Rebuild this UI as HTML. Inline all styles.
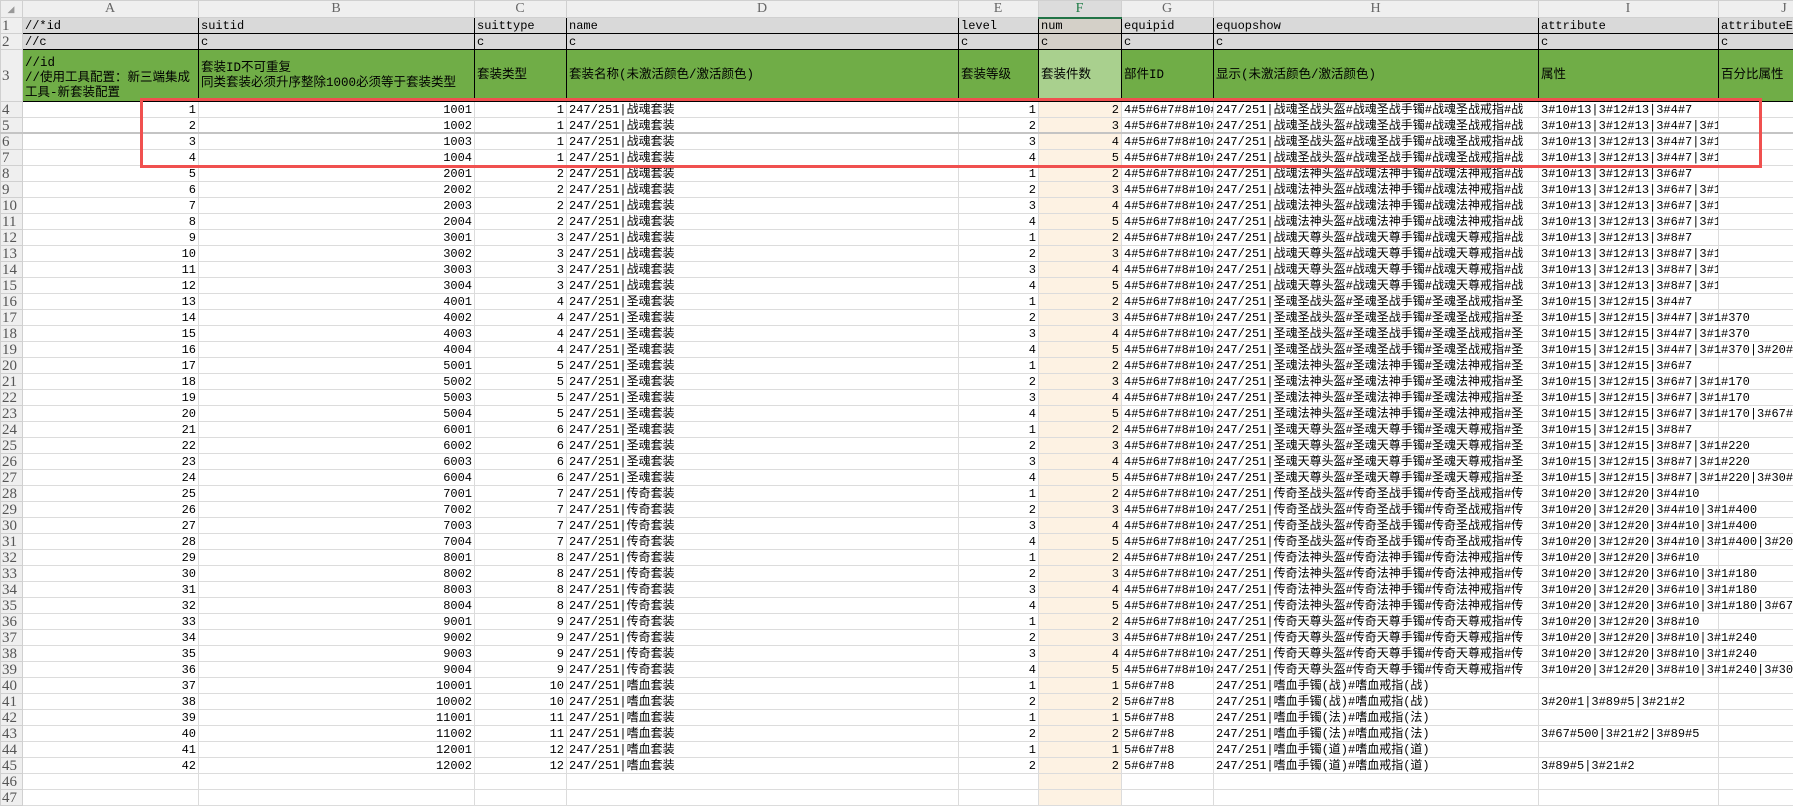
<!DOCTYPE html>
<html><head><meta charset="utf-8"><style>
*{box-sizing:border-box;margin:0;padding:0}
body{width:1793px;height:802px;overflow:hidden;background:#fff;position:relative;font-family:"Liberation Mono","Noto Sans CJK SC",monospace;font-size:12px;color:#000}
table{border-collapse:collapse;table-layout:fixed;width:1850px;position:absolute;left:0;top:0}
td,th{border:1px solid #dcdcdc;height:16px;line-height:14px;white-space:nowrap;overflow:hidden;padding:0 2px;vertical-align:bottom;font-weight:normal}
th{background:#efefef;color:#555;font-family:"Liberation Serif",serif;font-size:15px;text-align:left;padding-left:1px;border-color:#d0d0d0}
tr.h th{height:17px;text-align:center;font-size:14px;color:#666;vertical-align:middle}
tr.h th.sel{background:#dcdcdc;color:#1e7b45;border-bottom:2px solid #217346}
tr.g td{background:#d9d9d9;border-color:#000}
tr.g td.f{background:#d4d0c8}
tr.gr td{background:#70ad47;border-color:#000;height:52px;vertical-align:middle;white-space:normal;line-height:15px;font-size:12.5px}
tr.gr td.f{background:#a9d08e}
tr.gr th{vertical-align:middle}
td.r{text-align:right}
td.f{background:#fdf2e3}
td.v{overflow:visible}
</style></head><body>
<table>
<colgroup><col style="width:22px"><col style="width:176px"><col style="width:276px"><col style="width:92px"><col style="width:392px"><col style="width:80px"><col style="width:83px"><col style="width:92px"><col style="width:325px"><col style="width:180px"><col style="width:132px"></colgroup>
<tr class="h"><th style="font-size:9px;color:#999">◢</th><th>A</th><th>B</th><th>C</th><th>D</th><th>E</th><th class="sel">F</th><th>G</th><th>H</th><th>I</th><th>J</th></tr>
<tr class="g"><th>1</th><td>//*id</td><td>suitid</td><td>suittype</td><td>name</td><td>level</td><td class="f">num</td><td>equipid</td><td>equopshow</td><td>attribute</td><td>attributeEX</td></tr>
<tr class="g"><th>2</th><td>//c</td><td>c</td><td>c</td><td>c</td><td>c</td><td class="f">c</td><td>c</td><td>c</td><td>c</td><td>c</td></tr>
<tr class="gr"><th>3</th><td style="vertical-align:bottom">//id<br>//使用工具配置：新三端集成工具-新套装配置</td><td>套装ID不可重复<br>同类套装必须升序整除1000必须等于套装类型</td><td>套装类型</td><td>套装名称(未激活颜色/激活颜色)</td><td>套装等级</td><td class="f">套装件数</td><td>部件ID</td><td>显示(未激活颜色/激活颜色)</td><td>属性</td><td>百分比属性</td></tr>
<tr><th>4</th><td class="r">1</td><td class="r">1001</td><td class="r">1</td><td>247/251|战魂套装</td><td class="r">1</td><td class="f r">2</td><td>4#5#6#7#8#10#</td><td>247/251|战魂圣战头盔#战魂圣战手镯#战魂圣战戒指#战</td><td>3#10#13|3#12#13|3#4#7</td><td></td></tr>
<tr><th>5</th><td class="r">2</td><td class="r">1002</td><td class="r">1</td><td>247/251|战魂套装</td><td class="r">2</td><td class="f r">3</td><td>4#5#6#7#8#10#</td><td>247/251|战魂圣战头盔#战魂圣战手镯#战魂圣战戒指#战</td><td>3#10#13|3#12#13|3#4#7|3#1#10</td><td></td></tr>
<tr><th>6</th><td class="r">3</td><td class="r">1003</td><td class="r">1</td><td>247/251|战魂套装</td><td class="r">3</td><td class="f r">4</td><td>4#5#6#7#8#10#</td><td>247/251|战魂圣战头盔#战魂圣战手镯#战魂圣战戒指#战</td><td>3#10#13|3#12#13|3#4#7|3#1#10</td><td></td></tr>
<tr><th>7</th><td class="r">4</td><td class="r">1004</td><td class="r">1</td><td>247/251|战魂套装</td><td class="r">4</td><td class="f r">5</td><td>4#5#6#7#8#10#</td><td>247/251|战魂圣战头盔#战魂圣战手镯#战魂圣战戒指#战</td><td>3#10#13|3#12#13|3#4#7|3#1#10</td><td></td></tr>
<tr><th>8</th><td class="r">5</td><td class="r">2001</td><td class="r">2</td><td>247/251|战魂套装</td><td class="r">1</td><td class="f r">2</td><td>4#5#6#7#8#10#</td><td>247/251|战魂法神头盔#战魂法神手镯#战魂法神戒指#战</td><td>3#10#13|3#12#13|3#6#7</td><td></td></tr>
<tr><th>9</th><td class="r">6</td><td class="r">2002</td><td class="r">2</td><td>247/251|战魂套装</td><td class="r">2</td><td class="f r">3</td><td>4#5#6#7#8#10#</td><td>247/251|战魂法神头盔#战魂法神手镯#战魂法神戒指#战</td><td>3#10#13|3#12#13|3#6#7|3#1#10</td><td></td></tr>
<tr><th>10</th><td class="r">7</td><td class="r">2003</td><td class="r">2</td><td>247/251|战魂套装</td><td class="r">3</td><td class="f r">4</td><td>4#5#6#7#8#10#</td><td>247/251|战魂法神头盔#战魂法神手镯#战魂法神戒指#战</td><td>3#10#13|3#12#13|3#6#7|3#1#10</td><td></td></tr>
<tr><th>11</th><td class="r">8</td><td class="r">2004</td><td class="r">2</td><td>247/251|战魂套装</td><td class="r">4</td><td class="f r">5</td><td>4#5#6#7#8#10#</td><td>247/251|战魂法神头盔#战魂法神手镯#战魂法神戒指#战</td><td>3#10#13|3#12#13|3#6#7|3#1#10</td><td></td></tr>
<tr><th>12</th><td class="r">9</td><td class="r">3001</td><td class="r">3</td><td>247/251|战魂套装</td><td class="r">1</td><td class="f r">2</td><td>4#5#6#7#8#10#</td><td>247/251|战魂天尊头盔#战魂天尊手镯#战魂天尊戒指#战</td><td>3#10#13|3#12#13|3#8#7</td><td></td></tr>
<tr><th>13</th><td class="r">10</td><td class="r">3002</td><td class="r">3</td><td>247/251|战魂套装</td><td class="r">2</td><td class="f r">3</td><td>4#5#6#7#8#10#</td><td>247/251|战魂天尊头盔#战魂天尊手镯#战魂天尊戒指#战</td><td>3#10#13|3#12#13|3#8#7|3#1#10</td><td></td></tr>
<tr><th>14</th><td class="r">11</td><td class="r">3003</td><td class="r">3</td><td>247/251|战魂套装</td><td class="r">3</td><td class="f r">4</td><td>4#5#6#7#8#10#</td><td>247/251|战魂天尊头盔#战魂天尊手镯#战魂天尊戒指#战</td><td>3#10#13|3#12#13|3#8#7|3#1#10</td><td></td></tr>
<tr><th>15</th><td class="r">12</td><td class="r">3004</td><td class="r">3</td><td>247/251|战魂套装</td><td class="r">4</td><td class="f r">5</td><td>4#5#6#7#8#10#</td><td>247/251|战魂天尊头盔#战魂天尊手镯#战魂天尊戒指#战</td><td>3#10#13|3#12#13|3#8#7|3#1#10</td><td></td></tr>
<tr><th>16</th><td class="r">13</td><td class="r">4001</td><td class="r">4</td><td>247/251|圣魂套装</td><td class="r">1</td><td class="f r">2</td><td>4#5#6#7#8#10#</td><td>247/251|圣魂圣战头盔#圣魂圣战手镯#圣魂圣战戒指#圣</td><td>3#10#15|3#12#15|3#4#7</td><td></td></tr>
<tr><th>17</th><td class="r">14</td><td class="r">4002</td><td class="r">4</td><td>247/251|圣魂套装</td><td class="r">2</td><td class="f r">3</td><td>4#5#6#7#8#10#</td><td>247/251|圣魂圣战头盔#圣魂圣战手镯#圣魂圣战戒指#圣</td><td class="v">3#10#15|3#12#15|3#4#7|3#1#370</td><td></td></tr>
<tr><th>18</th><td class="r">15</td><td class="r">4003</td><td class="r">4</td><td>247/251|圣魂套装</td><td class="r">3</td><td class="f r">4</td><td>4#5#6#7#8#10#</td><td>247/251|圣魂圣战头盔#圣魂圣战手镯#圣魂圣战戒指#圣</td><td class="v">3#10#15|3#12#15|3#4#7|3#1#370</td><td></td></tr>
<tr><th>19</th><td class="r">16</td><td class="r">4004</td><td class="r">4</td><td>247/251|圣魂套装</td><td class="r">4</td><td class="f r">5</td><td>4#5#6#7#8#10#</td><td>247/251|圣魂圣战头盔#圣魂圣战手镯#圣魂圣战戒指#圣</td><td class="v">3#10#15|3#12#15|3#4#7|3#1#370|3#20#2</td><td></td></tr>
<tr><th>20</th><td class="r">17</td><td class="r">5001</td><td class="r">5</td><td>247/251|圣魂套装</td><td class="r">1</td><td class="f r">2</td><td>4#5#6#7#8#10#</td><td>247/251|圣魂法神头盔#圣魂法神手镯#圣魂法神戒指#圣</td><td>3#10#15|3#12#15|3#6#7</td><td></td></tr>
<tr><th>21</th><td class="r">18</td><td class="r">5002</td><td class="r">5</td><td>247/251|圣魂套装</td><td class="r">2</td><td class="f r">3</td><td>4#5#6#7#8#10#</td><td>247/251|圣魂法神头盔#圣魂法神手镯#圣魂法神戒指#圣</td><td class="v">3#10#15|3#12#15|3#6#7|3#1#170</td><td></td></tr>
<tr><th>22</th><td class="r">19</td><td class="r">5003</td><td class="r">5</td><td>247/251|圣魂套装</td><td class="r">3</td><td class="f r">4</td><td>4#5#6#7#8#10#</td><td>247/251|圣魂法神头盔#圣魂法神手镯#圣魂法神戒指#圣</td><td class="v">3#10#15|3#12#15|3#6#7|3#1#170</td><td></td></tr>
<tr><th>23</th><td class="r">20</td><td class="r">5004</td><td class="r">5</td><td>247/251|圣魂套装</td><td class="r">4</td><td class="f r">5</td><td>4#5#6#7#8#10#</td><td>247/251|圣魂法神头盔#圣魂法神手镯#圣魂法神戒指#圣</td><td class="v">3#10#15|3#12#15|3#6#7|3#1#170|3#67#5</td><td></td></tr>
<tr><th>24</th><td class="r">21</td><td class="r">6001</td><td class="r">6</td><td>247/251|圣魂套装</td><td class="r">1</td><td class="f r">2</td><td>4#5#6#7#8#10#</td><td>247/251|圣魂天尊头盔#圣魂天尊手镯#圣魂天尊戒指#圣</td><td>3#10#15|3#12#15|3#8#7</td><td></td></tr>
<tr><th>25</th><td class="r">22</td><td class="r">6002</td><td class="r">6</td><td>247/251|圣魂套装</td><td class="r">2</td><td class="f r">3</td><td>4#5#6#7#8#10#</td><td>247/251|圣魂天尊头盔#圣魂天尊手镯#圣魂天尊戒指#圣</td><td class="v">3#10#15|3#12#15|3#8#7|3#1#220</td><td></td></tr>
<tr><th>26</th><td class="r">23</td><td class="r">6003</td><td class="r">6</td><td>247/251|圣魂套装</td><td class="r">3</td><td class="f r">4</td><td>4#5#6#7#8#10#</td><td>247/251|圣魂天尊头盔#圣魂天尊手镯#圣魂天尊戒指#圣</td><td class="v">3#10#15|3#12#15|3#8#7|3#1#220</td><td></td></tr>
<tr><th>27</th><td class="r">24</td><td class="r">6004</td><td class="r">6</td><td>247/251|圣魂套装</td><td class="r">4</td><td class="f r">5</td><td>4#5#6#7#8#10#</td><td>247/251|圣魂天尊头盔#圣魂天尊手镯#圣魂天尊戒指#圣</td><td class="v">3#10#15|3#12#15|3#8#7|3#1#220|3#30#1</td><td></td></tr>
<tr><th>28</th><td class="r">25</td><td class="r">7001</td><td class="r">7</td><td>247/251|传奇套装</td><td class="r">1</td><td class="f r">2</td><td>4#5#6#7#8#10#</td><td>247/251|传奇圣战头盔#传奇圣战手镯#传奇圣战戒指#传</td><td>3#10#20|3#12#20|3#4#10</td><td></td></tr>
<tr><th>29</th><td class="r">26</td><td class="r">7002</td><td class="r">7</td><td>247/251|传奇套装</td><td class="r">2</td><td class="f r">3</td><td>4#5#6#7#8#10#</td><td>247/251|传奇圣战头盔#传奇圣战手镯#传奇圣战戒指#传</td><td class="v">3#10#20|3#12#20|3#4#10|3#1#400</td><td></td></tr>
<tr><th>30</th><td class="r">27</td><td class="r">7003</td><td class="r">7</td><td>247/251|传奇套装</td><td class="r">3</td><td class="f r">4</td><td>4#5#6#7#8#10#</td><td>247/251|传奇圣战头盔#传奇圣战手镯#传奇圣战戒指#传</td><td class="v">3#10#20|3#12#20|3#4#10|3#1#400</td><td></td></tr>
<tr><th>31</th><td class="r">28</td><td class="r">7004</td><td class="r">7</td><td>247/251|传奇套装</td><td class="r">4</td><td class="f r">5</td><td>4#5#6#7#8#10#</td><td>247/251|传奇圣战头盔#传奇圣战手镯#传奇圣战戒指#传</td><td class="v">3#10#20|3#12#20|3#4#10|3#1#400|3#20#2</td><td></td></tr>
<tr><th>32</th><td class="r">29</td><td class="r">8001</td><td class="r">8</td><td>247/251|传奇套装</td><td class="r">1</td><td class="f r">2</td><td>4#5#6#7#8#10#</td><td>247/251|传奇法神头盔#传奇法神手镯#传奇法神戒指#传</td><td>3#10#20|3#12#20|3#6#10</td><td></td></tr>
<tr><th>33</th><td class="r">30</td><td class="r">8002</td><td class="r">8</td><td>247/251|传奇套装</td><td class="r">2</td><td class="f r">3</td><td>4#5#6#7#8#10#</td><td>247/251|传奇法神头盔#传奇法神手镯#传奇法神戒指#传</td><td class="v">3#10#20|3#12#20|3#6#10|3#1#180</td><td></td></tr>
<tr><th>34</th><td class="r">31</td><td class="r">8003</td><td class="r">8</td><td>247/251|传奇套装</td><td class="r">3</td><td class="f r">4</td><td>4#5#6#7#8#10#</td><td>247/251|传奇法神头盔#传奇法神手镯#传奇法神戒指#传</td><td class="v">3#10#20|3#12#20|3#6#10|3#1#180</td><td></td></tr>
<tr><th>35</th><td class="r">32</td><td class="r">8004</td><td class="r">8</td><td>247/251|传奇套装</td><td class="r">4</td><td class="f r">5</td><td>4#5#6#7#8#10#</td><td>247/251|传奇法神头盔#传奇法神手镯#传奇法神戒指#传</td><td class="v">3#10#20|3#12#20|3#6#10|3#1#180|3#67#5</td><td></td></tr>
<tr><th>36</th><td class="r">33</td><td class="r">9001</td><td class="r">9</td><td>247/251|传奇套装</td><td class="r">1</td><td class="f r">2</td><td>4#5#6#7#8#10#</td><td>247/251|传奇天尊头盔#传奇天尊手镯#传奇天尊戒指#传</td><td>3#10#20|3#12#20|3#8#10</td><td></td></tr>
<tr><th>37</th><td class="r">34</td><td class="r">9002</td><td class="r">9</td><td>247/251|传奇套装</td><td class="r">2</td><td class="f r">3</td><td>4#5#6#7#8#10#</td><td>247/251|传奇天尊头盔#传奇天尊手镯#传奇天尊戒指#传</td><td class="v">3#10#20|3#12#20|3#8#10|3#1#240</td><td></td></tr>
<tr><th>38</th><td class="r">35</td><td class="r">9003</td><td class="r">9</td><td>247/251|传奇套装</td><td class="r">3</td><td class="f r">4</td><td>4#5#6#7#8#10#</td><td>247/251|传奇天尊头盔#传奇天尊手镯#传奇天尊戒指#传</td><td class="v">3#10#20|3#12#20|3#8#10|3#1#240</td><td></td></tr>
<tr><th>39</th><td class="r">36</td><td class="r">9004</td><td class="r">9</td><td>247/251|传奇套装</td><td class="r">4</td><td class="f r">5</td><td>4#5#6#7#8#10#</td><td>247/251|传奇天尊头盔#传奇天尊手镯#传奇天尊戒指#传</td><td class="v">3#10#20|3#12#20|3#8#10|3#1#240|3#30#1</td><td></td></tr>
<tr><th>40</th><td class="r">37</td><td class="r">10001</td><td class="r">10</td><td>247/251|嗜血套装</td><td class="r">1</td><td class="f r">1</td><td>5#6#7#8</td><td>247/251|嗜血手镯(战)#嗜血戒指(战)</td><td></td><td></td></tr>
<tr><th>41</th><td class="r">38</td><td class="r">10002</td><td class="r">10</td><td>247/251|嗜血套装</td><td class="r">2</td><td class="f r">2</td><td>5#6#7#8</td><td>247/251|嗜血手镯(战)#嗜血戒指(战)</td><td>3#20#1|3#89#5|3#21#2</td><td></td></tr>
<tr><th>42</th><td class="r">39</td><td class="r">11001</td><td class="r">11</td><td>247/251|嗜血套装</td><td class="r">1</td><td class="f r">1</td><td>5#6#7#8</td><td>247/251|嗜血手镯(法)#嗜血戒指(法)</td><td></td><td></td></tr>
<tr><th>43</th><td class="r">40</td><td class="r">11002</td><td class="r">11</td><td>247/251|嗜血套装</td><td class="r">2</td><td class="f r">2</td><td>5#6#7#8</td><td>247/251|嗜血手镯(法)#嗜血戒指(法)</td><td>3#67#500|3#21#2|3#89#5</td><td></td></tr>
<tr><th>44</th><td class="r">41</td><td class="r">12001</td><td class="r">12</td><td>247/251|嗜血套装</td><td class="r">1</td><td class="f r">1</td><td>5#6#7#8</td><td>247/251|嗜血手镯(道)#嗜血戒指(道)</td><td></td><td></td></tr>
<tr><th>45</th><td class="r">42</td><td class="r">12002</td><td class="r">12</td><td>247/251|嗜血套装</td><td class="r">2</td><td class="f r">2</td><td>5#6#7#8</td><td>247/251|嗜血手镯(道)#嗜血戒指(道)</td><td>3#89#5|3#21#2</td><td></td></tr>
<tr><th>46</th><td></td><td></td><td></td><td></td><td></td><td class="f"></td><td></td><td></td><td></td><td></td></tr>
<tr><th>47</th><td></td><td></td><td></td><td></td><td></td><td class="f"></td><td></td><td></td><td></td><td></td></tr>
</table>
<div style="position:absolute;left:0;top:132px;width:1793px;height:2px;background:#c4c4c4"></div>
<div style="position:absolute;left:140px;top:98px;width:1622px;height:70px;border:3px solid #f0504f"></div>
</body></html>
